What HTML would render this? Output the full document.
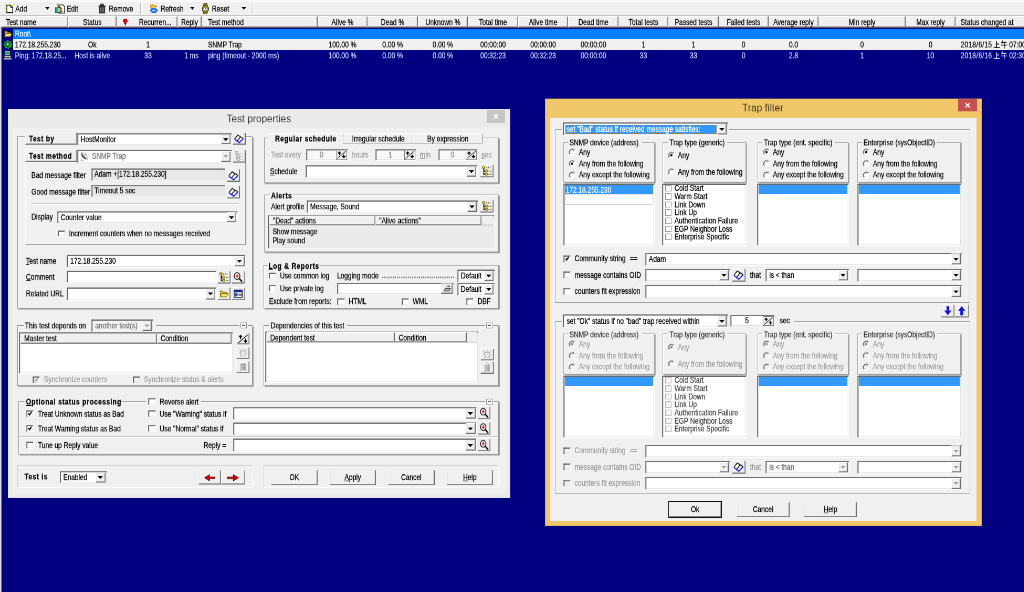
<!DOCTYPE html>
<html><head><meta charset="utf-8"><title>HostMonitor</title><style>
html,body{margin:0;padding:0;background:#000080;overflow:hidden}
body{width:1024px;height:592px;position:relative}
#root{position:absolute;left:0;top:0;width:1950.48px;height:925px;transform:scale(0.525,0.64);transform-origin:0 0;font-family:"Liberation Sans",sans-serif;font-size:12.5px;color:#000;overflow:hidden;will-change:transform}
#root div{position:absolute;box-sizing:border-box}
.t{white-space:nowrap;height:16px;line-height:16px;-webkit-text-stroke:0.3px}
.ttl{-webkit-text-stroke:0}
.b{font-weight:bold;letter-spacing:0.8px}
.g{color:#6d6d6d}
u{text-decoration:underline;text-underline-offset:1px}
.sunk{border-style:solid;border-width:1px 1.22px;border-color:#8c8c8c #fff #fff #8c8c8c;box-shadow:inset 1.22px 1px 0 #5c5c5c,inset -1.22px -1px 0 #e3e3e3}
.btn{background:#f0f0f0;border-style:solid;border-width:1px 1.22px;border-color:#fff #696969 #696969 #fff;box-shadow:inset -1.22px -1px 0 #a0a0a0,inset 1.22px 1px 0 #e8e8e8}
.btn.def{outline:1px solid #000}
.btn.sp{border-color:#808080;box-shadow:none;border-width:1.2px 1.46px}
.hdr{background:#f0f0f0;border-style:solid;border-width:1px 1.22px;border-color:#fff #696969 #696969 #fff;box-shadow:inset -1.22px -1px 0 #a0a0a0}
.cb .ar{position:absolute;left:50%;top:50%;width:9.9px;height:4.38px;margin-left:-5.14px;margin-top:-1.88px}
.grp{border-style:solid;border-width:1px 1.22px;border-color:#959595;box-shadow:inset 1.22px 1px 0 #fff}
.grp.shd{box-shadow:inset 1.22px 1px 0 #fff,1.95px 1.6px 0 #a0a0a0}
.ic{left:0;top:0;width:100%;height:100%}
</style></head><body><div id="root">
<div style="left:0px;top:0px;width:1950.48px;height:25.31px;background:#f0f0f0;"></div>
<div style="left:0px;top:0px;width:1950.48px;height:3.44px;background:#fafafa;"></div>
<div style="left:0px;top:24.06px;width:1950.48px;height:1.25px;background:#b4b4b4;"></div>
<div style="left:0px;top:25px;width:3.24px;height:900px;background:#dcdcdc;"></div>
<div style="left:2.1px;top:25px;width:1.52px;height:900px;background:#70708c;"></div>
<div style="left:7.62px;top:5px;width:20.19px;height:16.25px;"><svg viewBox="0 0 20 20" preserveAspectRatio="none" style="position:absolute;left:0;top:0;width:100%;height:100%"><path d="M1 1l4 4M19 1l-4 4M1 19l4-4M10 0v3M0 10h3" stroke="#e8e000" stroke-width="1.6"/><path d="M5 4h7l4 4v10H5z" fill="#fff" stroke="#222" stroke-width="1.5"/><path d="M12 4v4h4" fill="none" stroke="#222" stroke-width="1.2"/></svg></div>
<div class="t" style="left:29.33px;top:6.22px;">Add</div>
<div style="left:85.52px;top:11.25px;width:8.76px;height:4.06px;"><svg viewBox="0 0 7 4" preserveAspectRatio="none" style="position:absolute;left:0;top:0;width:100%;height:100%"><path d="M0 0h7L3.5 4z" fill="#000"/></svg></div>
<div style="left:103.81px;top:4.69px;width:21.14px;height:17.19px;"><svg viewBox="0 0 20 20" preserveAspectRatio="none" style="position:absolute;left:0;top:0;width:100%;height:100%"><path d="M7 3h8l3 3v12H7z" fill="#fff" stroke="#222" stroke-width="1.4"/><rect x="1.5" y="8" width="9" height="9" fill="#d8d060" stroke="#333" stroke-width="1"/><rect x="1.5" y="8" width="4" height="9" fill="#10a0c0"/><path d="M5 2l8 9" stroke="#6b4a00" stroke-width="2.2"/><path d="M4 1l3 3" stroke="#c0a000" stroke-width="2"/><path d="M9 14h6M9 16h6" stroke="#444" stroke-width="1"/></svg></div>
<div class="t" style="left:127.24px;top:6.22px;">Edit</div>
<div style="left:185.9px;top:5.31px;width:16.76px;height:16.56px;"><svg viewBox="0 0 16 20" preserveAspectRatio="none" style="position:absolute;left:0;top:0;width:100%;height:100%"><path d="M3 6h10v12.5H3z" fill="#444" stroke="#222" stroke-width="1"/><path d="M1.5 5.5h13" stroke="#222" stroke-width="2.2"/><path d="M5.5 1.5h5v3h-5z" fill="#555" stroke="#222" stroke-width="1.2"/><path d="M5.5 8v9M8 8v9M10.5 8v9" stroke="#999" stroke-width="0.9"/></svg></div>
<div class="t" style="left:207.24px;top:6.22px;">Remove</div>
<div style="left:267.05px;top:5px;width:1.33px;height:16.88px;background:#b8b8b8;"></div>
<div style="left:268.38px;top:5px;width:1.33px;height:16.88px;background:#fff;"></div>
<div style="left:283.43px;top:5.62px;width:19.43px;height:15.62px;"><svg viewBox="0 0 20 20" preserveAspectRatio="none" style="position:absolute;left:0;top:0;width:100%;height:100%"><path d="M3 3l5-2l5 3l-3 5l-6-1z" fill="#f4c020" stroke="#c08000" stroke-width="0.8"/><path d="M6 9l7-1l5 5l-4 5l-8-1l-3-4z" fill="#1f7cf0" stroke="#0a4bb0" stroke-width="0.8"/><path d="M8 6l4 2M7 13l6 1" stroke="#fff" stroke-width="1.2"/><circle cx="14.5" cy="5" r="1.6" fill="#e04040"/></svg></div>
<div class="t" style="left:305.9px;top:6.22px;">Refresh</div>
<div style="left:361.71px;top:11.25px;width:8.76px;height:4.06px;"><svg viewBox="0 0 7 4" preserveAspectRatio="none" style="position:absolute;left:0;top:0;width:100%;height:100%"><path d="M0 0h7L3.5 4z" fill="#000"/></svg></div>
<div style="left:382.86px;top:4.69px;width:16.38px;height:17.81px;"><svg viewBox="0 0 16 22" preserveAspectRatio="none" style="position:absolute;left:0;top:0;width:100%;height:100%"><path d="M5 0.5h6l1 5h-8z M5 21.5h6l1-5h-8z" fill="#8a8200" stroke="#222" stroke-width="0.9"/><circle cx="8" cy="11" r="6" fill="#c8c000" stroke="#222" stroke-width="1.3"/><circle cx="8" cy="11" r="3.3" fill="#fff" stroke="#444" stroke-width="0.7"/><path d="M8 11V8.6M8 11h2" stroke="#222" stroke-width="0.9"/></svg></div>
<div class="t" style="left:403.81px;top:6.22px;">Reset</div>
<div style="left:459.62px;top:11.25px;width:8.76px;height:4.06px;"><svg viewBox="0 0 7 4" preserveAspectRatio="none" style="position:absolute;left:0;top:0;width:100%;height:100%"><path d="M0 0h7L3.5 4z" fill="#000"/></svg></div>
<div style="left:481.14px;top:5px;width:1.33px;height:16.88px;background:#b8b8b8;"></div>
<div style="left:482.48px;top:5px;width:1.33px;height:16.88px;background:#fff;"></div>
<div style="left:0px;top:25.31px;width:1950.48px;height:17.81px;background:#f0f0f0;"></div>
<div class="hdr" style="left:3.43px;top:25.31px;width:126.1px;height:17.81px;"></div>
<div class="t" style="left:11.43px;top:27.16px;">Test name</div>
<div class="hdr" style="left:129.52px;top:25.31px;width:92.38px;height:17.81px;"></div>
<div class="t" style="left:110.48px;width:130.48px;text-align:center;top:27.16px;">Status</div>
<div class="hdr" style="left:221.9px;top:25.31px;width:116.19px;height:17.81px;"></div>
<div class="t" style="left:264.76px;top:27.16px;">Recurren...</div>
<div class="hdr" style="left:338.1px;top:25.31px;width:45.71px;height:17.81px;"></div>
<div class="t" style="left:319.05px;width:83.81px;text-align:center;top:27.16px;">Reply</div>
<div class="hdr" style="left:383.81px;top:25.31px;width:220.95px;height:17.81px;"></div>
<div class="t" style="left:396.19px;top:27.16px;">Test method</div>
<div class="hdr" style="left:604.76px;top:25.31px;width:95.24px;height:17.81px;"></div>
<div class="t" style="left:585.71px;width:133.33px;text-align:center;top:27.16px;">Alive %</div>
<div class="hdr" style="left:700px;top:25.31px;width:95.62px;height:17.81px;"></div>
<div class="t" style="left:680.95px;width:133.71px;text-align:center;top:27.16px;">Dead %</div>
<div class="hdr" style="left:795.62px;top:25.31px;width:95.81px;height:17.81px;"></div>
<div class="t" style="left:776.57px;width:133.9px;text-align:center;top:27.16px;">Unknown %</div>
<div class="hdr" style="left:891.43px;top:25.31px;width:95.24px;height:17.81px;"></div>
<div class="t" style="left:872.38px;width:133.33px;text-align:center;top:27.16px;">Total time</div>
<div class="hdr" style="left:986.67px;top:25.31px;width:95.81px;height:17.81px;"></div>
<div class="t" style="left:967.62px;width:133.9px;text-align:center;top:27.16px;">Alive time</div>
<div class="hdr" style="left:1082.48px;top:25.31px;width:95.62px;height:17.81px;"></div>
<div class="t" style="left:1063.43px;width:133.71px;text-align:center;top:27.16px;">Dead time</div>
<div class="hdr" style="left:1178.1px;top:25.31px;width:95.24px;height:17.81px;"></div>
<div class="t" style="left:1159.05px;width:133.33px;text-align:center;top:27.16px;">Total tests</div>
<div class="hdr" style="left:1273.33px;top:25.31px;width:95.24px;height:17.81px;"></div>
<div class="t" style="left:1254.29px;width:133.33px;text-align:center;top:27.16px;">Passed tests</div>
<div class="hdr" style="left:1368.57px;top:25.31px;width:95.24px;height:17.81px;"></div>
<div class="t" style="left:1349.52px;width:133.33px;text-align:center;top:27.16px;">Failed tests</div>
<div class="hdr" style="left:1463.81px;top:25.31px;width:95.24px;height:17.81px;"></div>
<div class="t" style="left:1444.76px;width:133.33px;text-align:center;top:27.16px;">Average reply</div>
<div class="hdr" style="left:1559.05px;top:25.31px;width:165.71px;height:17.81px;"></div>
<div class="t" style="left:1540px;width:203.81px;text-align:center;top:27.16px;">Min reply</div>
<div class="hdr" style="left:1724.76px;top:25.31px;width:95.24px;height:17.81px;"></div>
<div class="t" style="left:1705.71px;width:133.33px;text-align:center;top:27.16px;">Max reply</div>
<div class="hdr" style="left:1820px;top:25.31px;width:160.95px;height:17.81px;"></div>
<div class="t" style="left:1829.71px;top:27.16px;">Status changed at</div>
<div style="left:233.14px;top:29.06px;width:11.05px;height:10.94px;"><svg viewBox="0 0 10 12" preserveAspectRatio="none" style="position:absolute;left:0;top:0;width:100%;height:100%"><path d="M5 11L1 3.5L3 1h4l2 2.5z" fill="#e80000" stroke="#700" stroke-width="0.8"/><path d="M5 9v3" stroke="#222" stroke-width="1"/></svg></div>
<div style="left:0px;top:43.12px;width:1950.48px;height:0.62px;background:#40405e;"></div>
<div style="left:24.76px;top:44.84px;width:1925.71px;height:15.78px;background:#0080ff;"></div>
<div style="left:24.76px;top:60.62px;width:1925.71px;height:17.19px;background:#f0f0f0;"></div>
<div style="left:6.86px;top:46.88px;width:16.38px;height:11.56px;"><svg viewBox="0 0 18 14" preserveAspectRatio="none" style="position:absolute;left:0;top:0;width:100%;height:100%"><path d="M1 2h6l1.5 2H14v3H5L2 12V2z" fill="#c8b000" stroke="#3a3000" stroke-width="0.8"/><path d="M5 6.5H17.5L14 12.5H1.5z" fill="#f8e850" stroke="#3a3000" stroke-width="0.8"/></svg></div>
<div style="left:6.1px;top:61.88px;width:17.52px;height:15.31px;"><svg viewBox="0 0 18 18" preserveAspectRatio="none" style="position:absolute;left:0;top:0;width:100%;height:100%"><path d="M9 0l2.2 3.2L15 2.5l-.4 3.8L18 8.5l-3 2.3l1 3.7l-3.8-.2L10 17.8L8 15l-3.8 1l-.2-3.8L0.4 10L3 7.5L1.8 3.8l3.8.3z" fill="#00c000"/><circle cx="9" cy="8.6" r="4.6" fill="#0a8a0a" stroke="#063" stroke-width="0.8"/><circle cx="9" cy="8.2" r="2.4" fill="#d8f0d8" stroke="#222" stroke-width="0.8"/><path d="M9 11v4" stroke="#222" stroke-width="1.4"/></svg></div>
<div style="left:6.48px;top:79.06px;width:17.14px;height:14.69px;"><svg viewBox="0 0 18 18" preserveAspectRatio="none" style="position:absolute;left:0;top:0;width:100%;height:100%"><rect x="4" y="0.8" width="9.5" height="8" fill="#c8c8c8" stroke="#333" stroke-width="1"/><rect x="5.6" y="2.2" width="6" height="4.6" fill="#00b030"/><path d="M2.5 10h13v3h-13z" fill="#e8e8e8" stroke="#333" stroke-width="0.9"/><path d="M1 14.5h16v2.6H1z" fill="#f4f4f4" stroke="#333" stroke-width="0.9"/></svg></div>
<div class="t" style="left:28.57px;top:44.81px;color:#fff;">Root\</div>
<div class="t" style="left:28.57px;top:62px;color:#000;">172.18.255.230</div>
<div class="t" style="left:99.52px;width:152.38px;text-align:center;top:62px;color:#000;">Ok</div>
<div class="t" style="left:205.71px;width:152.38px;text-align:center;top:62px;color:#000;">1</div>
<div class="t" style="left:396.19px;top:62px;color:#000;">SNMP Trap</div>
<div class="t" style="left:576.19px;width:152.38px;text-align:center;top:62px;color:#000;">100.00 %</div>
<div class="t" style="left:671.62px;width:152.38px;text-align:center;top:62px;color:#000;">0.00 %</div>
<div class="t" style="left:767.33px;width:152.38px;text-align:center;top:62px;color:#000;">0.00 %</div>
<div class="t" style="left:862.86px;width:152.38px;text-align:center;top:62px;color:#000;">00:00:00</div>
<div class="t" style="left:958.38px;width:152.38px;text-align:center;top:62px;color:#000;">00:00:00</div>
<div class="t" style="left:1054.1px;width:152.38px;text-align:center;top:62px;color:#000;">00:00:00</div>
<div class="t" style="left:1149.52px;width:152.38px;text-align:center;top:62px;color:#000;">1</div>
<div class="t" style="left:1244.76px;width:152.38px;text-align:center;top:62px;color:#000;">1</div>
<div class="t" style="left:1340px;width:152.38px;text-align:center;top:62px;color:#000;">0</div>
<div class="t" style="left:1435.24px;width:152.38px;text-align:center;top:62px;color:#000;">0.0</div>
<div class="t" style="left:1565.71px;width:152.38px;text-align:center;top:62px;color:#000;">0</div>
<div class="t" style="left:1696.19px;width:152.38px;text-align:center;top:62px;color:#000;">0</div>
<div class="t" style="left:1829.71px;top:62px;color:#000;"><span style="letter-spacing:0.5px">2018/6/15</span><svg viewBox="0 0 22 11" preserveAspectRatio="none" style="display:inline-block;vertical-align:-1.5px;width:27px;height:12.5px;margin:0 3px 0 2.5px"><path d="M5 1v9M5 5h4M0.5 10h9.5" stroke="currentColor" stroke-width="1.3" fill="none"/><path d="M14.5 0.5L12.5 4M13.5 3h7M12 6.5h9.5M17 3v8" stroke="currentColor" stroke-width="1.1" fill="none"/></svg>07:00</div>
<div class="t" style="left:28.57px;top:78.56px;color:#c0d6ff;">Ping: 172.18.25...</div>
<div class="t" style="left:99.52px;width:152.38px;text-align:center;top:78.56px;color:#c0d6ff;">Host is alive</div>
<div class="t" style="left:205.71px;width:152.38px;text-align:center;top:78.56px;color:#c0d6ff;">33</div>
<div class="t" style="right:1572.19px;text-align:right;top:78.56px;color:#c0d6ff;">1 ms</div>
<div class="t" style="left:396.19px;top:78.56px;color:#c0d6ff;">ping (timeout - 2000 ms)</div>
<div class="t" style="left:576.19px;width:152.38px;text-align:center;top:78.56px;color:#c0d6ff;">100.00 %</div>
<div class="t" style="left:671.62px;width:152.38px;text-align:center;top:78.56px;color:#c0d6ff;">0.00 %</div>
<div class="t" style="left:767.33px;width:152.38px;text-align:center;top:78.56px;color:#c0d6ff;">0.00 %</div>
<div class="t" style="left:862.86px;width:152.38px;text-align:center;top:78.56px;color:#c0d6ff;">00:32:23</div>
<div class="t" style="left:958.38px;width:152.38px;text-align:center;top:78.56px;color:#c0d6ff;">00:32:23</div>
<div class="t" style="left:1054.1px;width:152.38px;text-align:center;top:78.56px;color:#c0d6ff;">00:00:00</div>
<div class="t" style="left:1149.52px;width:152.38px;text-align:center;top:78.56px;color:#c0d6ff;">33</div>
<div class="t" style="left:1244.76px;width:152.38px;text-align:center;top:78.56px;color:#c0d6ff;">33</div>
<div class="t" style="left:1340px;width:152.38px;text-align:center;top:78.56px;color:#c0d6ff;">0</div>
<div class="t" style="left:1435.24px;width:152.38px;text-align:center;top:78.56px;color:#c0d6ff;">2.8</div>
<div class="t" style="left:1565.71px;width:152.38px;text-align:center;top:78.56px;color:#c0d6ff;">1</div>
<div class="t" style="left:1696.19px;width:152.38px;text-align:center;top:78.56px;color:#c0d6ff;">10</div>
<div class="t" style="left:1829.71px;top:78.56px;color:#c0d6ff;"><span style="letter-spacing:0.5px">2018/6/16</span><svg viewBox="0 0 22 11" preserveAspectRatio="none" style="display:inline-block;vertical-align:-1.5px;width:27px;height:12.5px;margin:0 3px 0 2.5px"><path d="M5 1v9M5 5h4M0.5 10h9.5" stroke="currentColor" stroke-width="1.3" fill="none"/><path d="M14.5 0.5L12.5 4M13.5 3h7M12 6.5h9.5M17 3v8" stroke="currentColor" stroke-width="1.1" fill="none"/></svg>02:30</div>
<div style="left:15.24px;top:170.31px;width:956.95px;height:608.12px;background:#ebebeb;border:1px solid #dedede;"></div>
<div style="left:23.62px;top:200.94px;width:940.19px;height:570.63px;background:#f0f0f0;border:1px solid #f8f8f8;"></div>
<div class="t ttl" style="left:293.33px;width:400px;text-align:center;top:176.25px;height:20px;line-height:20px;font-size:15.6px;color:#3c3c3c;transform:scaleX(1.2)">Test properties</div>
<div style="left:926.86px;top:171.88px;width:35.05px;height:19.69px;background:#c6c6c6;"><svg viewBox="0 0 30 20" preserveAspectRatio="none" style="position:absolute;left:0;top:0;width:100%;height:100%"><path d="M11.5 6.5l7 7M18.5 6.5l-7 7" stroke="#fff" stroke-width="1.8"/></svg></div>
<div class="grp shd" style="left:33.14px;top:213.44px;width:448px;height:268.44px;"></div>
<div style="left:47.62px;top:252.5px;width:420.19px;height:129.69px;background:#f0f0f0;border-style:solid;border-width:1px 1.22px;border-color:#fff #9a9a9a #9a9a9a #fff;box-shadow:1.22px 1px 0 #b8b8b8;"></div>
<div class="btn" style="left:47.62px;top:206.41px;width:99.43px;height:19.69px;"></div>
<div class="t b" style="left:55.24px;top:208.72px;">Test by</div>
<div class="btn" style="left:47.62px;top:232.97px;width:99.43px;height:20.31px;"></div>
<div class="t b" style="left:55.24px;top:235.75px;">Test method</div>
<div class="sunk" style="left:146.67px;top:207.66px;width:295.05px;height:19.69px;background:#fff;"></div>
<div class="btn cb" style="left:420.57px;top:209.53px;width:18.29px;height:15.94px;"><svg class="ar" viewBox="0 0 7 4" preserveAspectRatio="none"><path d="M0 0h7L3.5 4z" fill="#000"/></svg></div>
<div class="t" style="left:153.52px;top:209.66px;color:#000;">HostMonitor</div>
<div class="btn" style="left:443.05px;top:207.34px;width:24.76px;height:19.06px;"><svg viewBox="0 0 20 16" preserveAspectRatio="none" style="position:absolute;left:0;top:0;width:100%;height:100%"><path d="M2.4 8.6L7.8 3L17.1 7.8L10.2 13.8z" fill="#fff"/><path d="M2.4 8.6L7.8 3L17.1 7.8" fill="none" stroke="#111" stroke-width="1.4"/><path d="M2.4 8.8L10.2 13.9L17.1 8" fill="none" stroke="#2020f0" stroke-width="1.7"/><path d="M6.6 11.6L12.8 5.2" stroke="#222" stroke-width="1.5"/></svg></div>
<div class="sunk" style="left:146.67px;top:234.22px;width:295.05px;height:20.31px;background:#fff;"></div>
<div class="btn cb" style="left:420.57px;top:236.09px;width:18.29px;height:16.56px;"><svg class="ar" viewBox="0 0 7 4" preserveAspectRatio="none"><path d="M0 0h7L3.5 4z" fill="#a0a0a0"/></svg></div>
<div style="left:151.62px;top:236.25px;width:17.9px;height:15.94px;"><svg viewBox="0 0 20 20" preserveAspectRatio="none" style="position:absolute;left:0;top:0;width:100%;height:100%"><path d="M3 2C1 9 6 17 17 16.5C13 14 6 9 3 2z" fill="#555"/><path d="M4 2.5C7 8 12 13 17 16C17 10 12 4 4 2.5z" fill="#e2e2e2" stroke="#b0b0b0" stroke-width="0.8"/><path d="M9 10L14 5M10.5 3.5l5 5" stroke="#9a9a9a" stroke-width="1.1"/><path d="M4 15l-2 4h8" fill="none" stroke="#b8b8b8" stroke-width="1.6"/></svg></div>
<div class="t" style="left:175.24px;top:236.38px;color:#7a7a7a;">SNMP Trap</div>
<div class="btn" style="left:443.05px;top:233.91px;width:24.76px;height:19.69px;"><svg viewBox="0 0 20 16" preserveAspectRatio="none" style="position:absolute;left:0;top:0;width:100%;height:100%"><path d="M6 2v12M6 5h5M6 9h5M6 13h5" stroke="#a4a4a4" stroke-width="1.2" fill="none"/><rect x="4" y="1.5" width="4" height="3.2" fill="#e8e8e8" stroke="#a8a8a8" stroke-width="0.9"/><rect x="7" y="6.5" width="4" height="3.2" fill="#e8e8e8" stroke="#a8a8a8" stroke-width="0.9"/><rect x="7" y="10.8" width="4" height="3.2" fill="#e8e8e8" stroke="#a8a8a8" stroke-width="0.9"/><path d="M12 5h5M12 9h5M12 13h5" stroke="#9c9c9c" stroke-width="1.2" stroke-dasharray="1.3 1.3"/></svg></div>
<div class="t" style="left:59.81px;top:266.06px;">Bad message filter</div>
<div class="sunk" style="left:174.48px;top:263.44px;width:254.67px;height:19.38px;background:#e8e8e8;"></div>
<div class="t" style="left:179.81px;top:264.19px;">Adam +[172.18.255.230]</div>
<div class="btn" style="left:431.62px;top:263.91px;width:25.52px;height:20.31px;"><svg viewBox="0 0 20 16" preserveAspectRatio="none" style="position:absolute;left:0;top:0;width:100%;height:100%"><path d="M2.4 8.6L7.8 3L17.1 7.8L10.2 13.8z" fill="#fff"/><path d="M2.4 8.6L7.8 3L17.1 7.8" fill="none" stroke="#111" stroke-width="1.4"/><path d="M2.4 8.8L10.2 13.9L17.1 8" fill="none" stroke="#2020f0" stroke-width="1.7"/><path d="M6.6 11.6L12.8 5.2" stroke="#222" stroke-width="1.5"/></svg></div>
<div class="t" style="left:59.81px;top:291.69px;">Good message filter</div>
<div class="sunk" style="left:174.48px;top:289.06px;width:254.67px;height:19.06px;background:#e8e8e8;"></div>
<div class="t" style="left:179.81px;top:289.81px;">Timeout 5 sec</div>
<div class="btn" style="left:431.62px;top:289.84px;width:25.52px;height:20px;"><svg viewBox="0 0 20 16" preserveAspectRatio="none" style="position:absolute;left:0;top:0;width:100%;height:100%"><path d="M2.4 8.6L7.8 3L17.1 7.8L10.2 13.8z" fill="#fff"/><path d="M2.4 8.6L7.8 3L17.1 7.8" fill="none" stroke="#111" stroke-width="1.4"/><path d="M2.4 8.8L10.2 13.9L17.1 8" fill="none" stroke="#2020f0" stroke-width="1.7"/><path d="M6.6 11.6L12.8 5.2" stroke="#222" stroke-width="1.5"/></svg></div>
<div style="left:59.81px;top:318.12px;width:395.43px;height:1.09px;background:#a0a0a0;"></div>
<div style="left:59.81px;top:319.22px;width:395.43px;height:1.09px;background:#fff;"></div>
<div class="t" style="left:59.81px;top:331.38px;">Display</div>
<div class="sunk" style="left:108.95px;top:329.53px;width:344.19px;height:19.69px;background:#fff;"></div>
<div class="btn cb" style="left:432px;top:331.41px;width:18.29px;height:15.94px;"><svg class="ar" viewBox="0 0 7 4" preserveAspectRatio="none"><path d="M0 0h7L3.5 4z" fill="#000"/></svg></div>
<div class="t" style="left:115.81px;top:331.53px;color:#000;">Counter value</div>
<div class="sunk" style="left:109.71px;top:359.69px;width:14.29px;height:10.63px;background:#fff;"></div>
<div class="t" style="left:131.43px;top:357px;">Increment counters when no messages received</div>
<div class="t" style="left:49.52px;top:399.81px;"><u>T</u>est name</div>
<div class="sunk" style="left:126.86px;top:397.66px;width:341.52px;height:20.31px;background:#fff;"></div>
<div class="btn cb" style="left:447.24px;top:399.53px;width:18.29px;height:16.56px;"><svg class="ar" viewBox="0 0 7 4" preserveAspectRatio="none"><path d="M0 0h7L3.5 4z" fill="#000"/></svg></div>
<div class="t" style="left:133.71px;top:399.97px;color:#000;">172.18.255.230</div>
<div class="t" style="left:49.52px;top:424.81px;"><u>C</u>omment</div>
<div class="sunk" style="left:126.86px;top:423.44px;width:286.29px;height:18.75px;background:#fff;"></div>
<div class="btn" style="left:414.48px;top:423.28px;width:24.76px;height:20px;"><svg viewBox="0 0 20 16" preserveAspectRatio="none" style="position:absolute;left:0;top:0;width:100%;height:100%"><path d="M5.5 3v10.5M5.5 8.2h4M5.5 12.6h4" stroke="#111" stroke-width="1.4" fill="none"/><rect x="3.2" y="1.6" width="4" height="3.2" rx="1.2" fill="#f0e000" stroke="#443a00" stroke-width="0.8"/><rect x="7.6" y="6.4" width="4" height="3.2" rx="1.2" fill="#f0e000" stroke="#443a00" stroke-width="0.8"/><rect x="7.6" y="10.8" width="4" height="3.2" rx="1.2" fill="#f0e000" stroke="#443a00" stroke-width="0.8"/><path d="M9 3.6h7M13 8.4h5M13 12.8h5" stroke="#333" stroke-width="1.2" stroke-dasharray="1.5 1.5"/></svg></div>
<div class="btn" style="left:441.14px;top:423.28px;width:25.52px;height:20px;"><svg viewBox="0 0 20 16" preserveAspectRatio="none" style="position:absolute;left:0;top:0;width:100%;height:100%"><circle cx="8.2" cy="6.5" r="4.6" fill="#fff" stroke="#222" stroke-width="1.4"/><path d="M8.2 4v5M5.7 6.5h5" stroke="#e00000" stroke-width="1.5"/><path d="M11.6 9.8L16.5 14.5" stroke="#111" stroke-width="2.2"/></svg></div>
<div class="t" style="left:49.52px;top:450.75px;">Related URL</div>
<div class="sunk" style="left:126.86px;top:449.22px;width:286.29px;height:20.31px;background:#fff;"></div>
<div class="btn cb" style="left:392px;top:451.09px;width:18.29px;height:16.56px;"><svg class="ar" viewBox="0 0 7 4" preserveAspectRatio="none"><path d="M0 0h7L3.5 4z" fill="#000"/></svg></div>
<div class="btn" style="left:414.48px;top:449.22px;width:24.76px;height:19.38px;"><svg viewBox="0 0 20 16" preserveAspectRatio="none" style="position:absolute;left:0;top:0;width:100%;height:100%"><path d="M3 4.5h5l1.2 1.3H15v2H6.5L4 12.5V4.5z" fill="#e8d040" stroke="#6b5a00" stroke-width="0.8"/><path d="M6.5 7.8H17.5L14.8 12.8H3.8z" fill="#f6e860" stroke="#6b5a00" stroke-width="0.8"/></svg></div>
<div class="btn" style="left:441.14px;top:449.22px;width:25.52px;height:19.38px;"><svg viewBox="0 0 20 16" preserveAspectRatio="none" style="position:absolute;left:0;top:0;width:100%;height:100%"><rect x="3.5" y="3" width="13" height="10.5" fill="#fff" stroke="#111" stroke-width="1.1"/><rect x="3.5" y="3" width="13" height="3" fill="#0a2a9a"/><rect x="5" y="7.5" width="4" height="4.5" fill="#0a5ad0"/><rect x="10.5" y="8" width="2" height="3" fill="#d02020"/><rect x="13.4" y="8" width="2" height="3" fill="#222"/></svg></div>
<div class="grp shd" style="left:33.14px;top:508.44px;width:448px;height:94.69px;"></div>
<div style="left:44.76px;top:501.56px;width:252.38px;height:14.06px;background:#f0f0f0;"></div>
<div class="t" style="left:47.62px;top:500.75px;">This test depends on</div>
<div class="sunk" style="left:174.48px;top:499.22px;width:117.52px;height:19.69px;background:#f4f4f4;"></div>
<div class="btn cb" style="left:270.86px;top:501.09px;width:18.29px;height:15.94px;"><svg class="ar" viewBox="0 0 7 4" preserveAspectRatio="none"><path d="M0 0h7L3.5 4z" fill="#a0a0a0"/></svg></div>
<div class="t" style="left:181.33px;top:501.22px;color:#6d6d6d;">another test(s)</div>
<div style="left:456.38px;top:503.75px;width:15.24px;height:9.06px;background:#f0f0f0;"></div>
<div style="left:458.29px;top:503.75px;width:11.43px;height:9.06px;background:#fff;border-style:solid;border-width:1px 1.22px;border-color:#8c8c8c;"><svg viewBox="0 0 10 10" preserveAspectRatio="none" style="position:absolute;left:0;top:0;width:100%;height:100%"><path d="M2 4.6h6" stroke="#333" stroke-width="1.6"/></svg></div>
<div class="sunk" style="left:36.19px;top:519.38px;width:407.43px;height:64.38px;background:#fff;"></div>
<div class="hdr" style="left:39.24px;top:520.62px;width:259.81px;height:16.25px;"></div>
<div class="t" style="left:46.1px;top:521.06px;">Master test</div>
<div class="hdr" style="left:299.05px;top:520.62px;width:141.71px;height:16.25px;"></div>
<div class="t" style="left:305.9px;top:521.06px;">Condition</div>
<div class="btn" style="left:449.52px;top:519.53px;width:25.9px;height:18.75px;"><svg viewBox="0 0 20 16" preserveAspectRatio="none" style="position:absolute;left:0;top:0;width:100%;height:100%"><path d="M2.5 14L17.5 2" stroke="#111" stroke-width="1.2"/><path d="M6 1.6L9.4 5.6H2.6z M5.2 5.6h1.6v3H5.2z" fill="#000"/><path d="M14 14.6L10.6 10.6h6.8z M13.2 7.6h1.6v3h-1.6z" fill="#000"/></svg></div>
<div class="btn flat" style="left:449.52px;top:542.03px;width:25.9px;height:18.75px;"><svg viewBox="0 0 20 16" preserveAspectRatio="none" style="position:absolute;left:0;top:0;width:100%;height:100%"><rect x="6" y="5" width="8.5" height="8" fill="#e4e4e4" stroke="#a8a8a8" stroke-width="1"/><path d="M4 2.5l3 3M16.5 2.5l-3 3M10.2 1.5v3.5M3.5 8.5h2.5M17 8.5h-2.5" stroke="#b0b0b0" stroke-width="1"/><path d="M7 13.5h7" stroke="#fff" stroke-width="1"/></svg></div>
<div class="btn flat" style="left:449.52px;top:563.91px;width:25.9px;height:19.38px;"><svg viewBox="0 0 20 16" preserveAspectRatio="none" style="position:absolute;left:0;top:0;width:100%;height:100%"><path d="M6.5 4.5h7.5v9.5h-7.5z" fill="#d8d8d8" stroke="#a0a0a0" stroke-width="1"/><path d="M5.5 4.2h9.5M8.5 2.3h3.5v1.8M8.4 6.3v6M10.3 6.3v6M12.2 6.3v6" stroke="#9a9a9a" stroke-width="1" fill="none"/><path d="M14.8 5v9.3H7" stroke="#fff" stroke-width="0.9" fill="none"/></svg></div>
<div class="sunk" style="left:62.1px;top:588.12px;width:14.29px;height:10.63px;background:#f0f0f0;"><svg viewBox="0 0 9 9" style="position:absolute;left:0;top:0;width:100%;height:100%"><path d="M1.5 4.2L3.5 6.4L7.5 1.8" stroke="#a0a0a0" stroke-width="2.1" fill="none"/></svg></div>
<div class="t" style="left:83.81px;top:585.44px;color:#9a9a9a;text-shadow:1px 1px 0 #fff;">Synchronize counters</div>
<div class="sunk" style="left:252.57px;top:588.12px;width:14.29px;height:10.63px;background:#f0f0f0;"></div>
<div class="t" style="left:274.29px;top:585.44px;color:#9a9a9a;text-shadow:1px 1px 0 #fff;">Synchronize status &amp; alerts</div>
<div class="grp shd" style="left:502.86px;top:214.69px;width:446.86px;height:71.25px;"></div>
<div style="left:510.48px;top:207.81px;width:144px;height:16.88px;background:#f0f0f0;border-style:solid;border-width:1px 1.22px 0 1.22px;border-color:#fff #8c8c8c #fff #fff;"></div>
<div class="t b" style="left:510.48px;width:144px;text-align:center;top:208.88px;">Regular schedule</div>
<div style="left:654.48px;top:207.81px;width:132.19px;height:16.88px;background:#f0f0f0;border-style:solid;border-width:1px 1.22px 0 1.22px;border-color:#fff #8c8c8c #fff #fff;"></div>
<div class="t" style="left:654.48px;width:132.19px;text-align:center;top:208.88px;">Irregular schedule</div>
<div style="left:786.67px;top:207.81px;width:132.57px;height:16.88px;background:#f0f0f0;border-style:solid;border-width:1px 1.22px 0 1.22px;border-color:#fff #8c8c8c #fff #fff;"></div>
<div class="t" style="left:786.67px;width:132.57px;text-align:center;top:208.88px;">By expression</div>
<div style="left:654.48px;top:224.06px;width:264.76px;height:1.25px;background:#b4b4b4;"></div>
<div class="t" style="left:516.19px;top:233.56px;color:#9a9a9a;text-shadow:1px 1px 0 #fff;">Test every</div>
<div class="sunk" style="left:583.24px;top:232.81px;width:80.19px;height:18.12px;background:#f8f8f8;"></div>
<div class="t" style="left:583.9px;width:57.14px;text-align:center;top:233.88px;color:#8a8a8a;">0</div>
<div class="btn sp" style="left:640px;top:234.06px;width:21.33px;height:15.62px;"><svg viewBox="0 0 20 18" preserveAspectRatio="none" style="position:absolute;left:0;top:0;width:100%;height:100%"><path d="M1.5 16.5L18.5 1.5" stroke="#111" stroke-width="1.2"/><path d="M5.6 1.6L9.6 6.2H1.6z M4.6 6.2h2v3.4h-2z" fill="#000"/><path d="M14.4 16.4L10.4 11.8h8z M13.4 8.4h2v3.4h-2z" fill="#000"/></svg></div>
<div class="t" style="left:670.48px;top:233.56px;color:#9a9a9a;text-shadow:1px 1px 0 #fff;">hours</div>
<div class="sunk" style="left:714.67px;top:232.81px;width:78.67px;height:18.12px;background:#f8f8f8;"></div>
<div class="t" style="left:714.57px;width:57.14px;text-align:center;top:233.88px;color:#8a8a8a;">1</div>
<div class="btn sp" style="left:769.9px;top:234.06px;width:21.33px;height:15.62px;"><svg viewBox="0 0 20 18" preserveAspectRatio="none" style="position:absolute;left:0;top:0;width:100%;height:100%"><path d="M1.5 16.5L18.5 1.5" stroke="#111" stroke-width="1.2"/><path d="M5.6 1.6L9.6 6.2H1.6z M4.6 6.2h2v3.4h-2z" fill="#000"/><path d="M14.4 16.4L10.4 11.8h8z M13.4 8.4h2v3.4h-2z" fill="#000"/></svg></div>
<div class="t" style="left:800px;top:233.56px;color:#9a9a9a;text-shadow:1px 1px 0 #fff;"><u>m</u>in</div>
<div class="sunk" style="left:834.67px;top:232.81px;width:75.62px;height:18.12px;background:#f8f8f8;"></div>
<div class="t" style="left:833.05px;width:57.14px;text-align:center;top:233.88px;color:#8a8a8a;">0</div>
<div class="btn sp" style="left:886.86px;top:234.06px;width:21.33px;height:15.62px;"><svg viewBox="0 0 20 18" preserveAspectRatio="none" style="position:absolute;left:0;top:0;width:100%;height:100%"><path d="M1.5 16.5L18.5 1.5" stroke="#111" stroke-width="1.2"/><path d="M5.6 1.6L9.6 6.2H1.6z M4.6 6.2h2v3.4h-2z" fill="#000"/><path d="M14.4 16.4L10.4 11.8h8z M13.4 8.4h2v3.4h-2z" fill="#000"/></svg></div>
<div class="t" style="left:917.33px;top:233.56px;color:#9a9a9a;text-shadow:1px 1px 0 #fff;"><u>s</u>ec</div>
<div class="t" style="left:514.29px;top:259.81px;"><u>S</u>chedule</div>
<div class="sunk" style="left:582.1px;top:257.97px;width:328.19px;height:20px;background:#fff;"></div>
<div class="btn cb" style="left:889.14px;top:259.84px;width:18.29px;height:16.25px;"><svg class="ar" viewBox="0 0 7 4" preserveAspectRatio="none"><path d="M0 0h7L3.5 4z" fill="#000"/></svg></div>
<div class="btn" style="left:914.29px;top:257.03px;width:25.9px;height:20px;"><svg viewBox="0 0 20 16" preserveAspectRatio="none" style="position:absolute;left:0;top:0;width:100%;height:100%"><path d="M5.5 3v10.5M5.5 8.2h4M5.5 12.6h4" stroke="#111" stroke-width="1.4" fill="none"/><rect x="3.2" y="1.6" width="4" height="3.2" rx="1.2" fill="#f0e000" stroke="#443a00" stroke-width="0.8"/><rect x="7.6" y="6.4" width="4" height="3.2" rx="1.2" fill="#f0e000" stroke="#443a00" stroke-width="0.8"/><rect x="7.6" y="10.8" width="4" height="3.2" rx="1.2" fill="#f0e000" stroke="#443a00" stroke-width="0.8"/><path d="M9 3.6h7M13 8.4h5M13 12.8h5" stroke="#333" stroke-width="1.2" stroke-dasharray="1.5 1.5"/></svg></div>
<div class="grp shd" style="left:502.86px;top:304.06px;width:446.86px;height:90.31px;"></div>
<div style="left:514.29px;top:299.69px;width:41.9px;height:12.5px;background:#f0f0f0;"></div>
<div class="t b" style="left:516.19px;top:297.94px;">Alerts</div>
<div class="t" style="left:516.19px;top:314.5px;">Alert <u>p</u>rofile</div>
<div class="sunk" style="left:584px;top:312.66px;width:327.05px;height:20px;background:#fff;"></div>
<div class="btn cb" style="left:889.9px;top:314.53px;width:18.29px;height:16.25px;"><svg class="ar" viewBox="0 0 7 4" preserveAspectRatio="none"><path d="M0 0h7L3.5 4z" fill="#000"/></svg></div>
<div class="t" style="left:590.86px;top:314.81px;color:#000;">Message, Sound</div>
<div class="btn" style="left:914.29px;top:311.72px;width:25.9px;height:20px;"><svg viewBox="0 0 20 16" preserveAspectRatio="none" style="position:absolute;left:0;top:0;width:100%;height:100%"><path d="M5.5 3v10.5M5.5 8.2h4M5.5 12.6h4" stroke="#111" stroke-width="1.4" fill="none"/><rect x="3.2" y="1.6" width="4" height="3.2" rx="1.2" fill="#f0e000" stroke="#443a00" stroke-width="0.8"/><rect x="7.6" y="6.4" width="4" height="3.2" rx="1.2" fill="#f0e000" stroke="#443a00" stroke-width="0.8"/><rect x="7.6" y="10.8" width="4" height="3.2" rx="1.2" fill="#f0e000" stroke="#443a00" stroke-width="0.8"/><path d="M9 3.6h7M13 8.4h5M13 12.8h5" stroke="#333" stroke-width="1.2" stroke-dasharray="1.5 1.5"/></svg></div>
<div class="sunk" style="left:510.48px;top:335.62px;width:431.05px;height:53.44px;background:#ebebeb;"></div>
<div class="hdr" style="left:513.14px;top:336.88px;width:202.29px;height:15.62px;"></div>
<div class="t" style="left:520px;top:337px;">"Dead" actions</div>
<div class="hdr" style="left:715.43px;top:336.88px;width:201.9px;height:15.62px;"></div>
<div class="t" style="left:722.29px;top:337px;">"Alive actions"</div>
<div style="left:917.33px;top:336.88px;width:21.71px;height:15.62px;background:#f0f0f0;border-bottom:1px solid #a0a0a0;"></div>
<div class="t" style="left:519.24px;top:353.56px;">Show message</div>
<div class="t" style="left:519.24px;top:367.62px;">Play sound</div>
<div class="grp shd" style="left:502.1px;top:414.06px;width:447.62px;height:67.81px;"></div>
<div style="left:509.71px;top:409.38px;width:99.05px;height:12.5px;background:#f0f0f0;"></div>
<div class="t b" style="left:511.62px;top:407.62px;"><u>L</u>og &amp; Reports</div>
<div class="sunk" style="left:511.62px;top:425.63px;width:14.29px;height:10.63px;background:#fff;"></div>
<div class="t" style="left:533.33px;top:422.94px;">Use common log</div>
<div class="t" style="left:641.9px;top:422.94px;">Logging mode</div>
<div class="t" style="left:726.67px;top:422.31px;color:#555;letter-spacing:0.08px;overflow:hidden;width:137.14px;">........................................</div>
<div class="sunk" style="left:870.86px;top:421.09px;width:71.81px;height:19.69px;background:#fff;"></div>
<div class="btn cb" style="left:921.52px;top:422.97px;width:18.29px;height:15.94px;"><svg class="ar" viewBox="0 0 7 4" preserveAspectRatio="none"><path d="M0 0h7L3.5 4z" fill="#000"/></svg></div>
<div class="t" style="left:877.71px;top:423.09px;color:#000;">Default</div>
<div class="sunk" style="left:511.62px;top:445.31px;width:14.29px;height:10.63px;background:#fff;"></div>
<div class="t" style="left:533.33px;top:442.62px;">Use private log</div>
<div class="sunk" style="left:642.29px;top:442.19px;width:222.29px;height:18.13px;background:#fff;"></div>
<div class="btn" style="left:840px;top:443.28px;width:22.1px;height:15.94px;"><svg viewBox="0 0 20 16" preserveAspectRatio="none" style="position:absolute;left:0;top:0;width:100%;height:100%"><path d="M4 12.5h12.5M5 10.5h10.5l1.5-3H8z" fill="#ddd" stroke="#222" stroke-width="1"/><path d="M9 5.5c1.5-2.5 4-2.8 6-1.5M13.8 2.4l1.6 1.7l-2.3 0.8" fill="none" stroke="#222" stroke-width="1"/></svg></div>
<div class="sunk" style="left:870.86px;top:442.03px;width:71.81px;height:19.69px;background:#fff;"></div>
<div class="btn cb" style="left:921.52px;top:443.91px;width:18.29px;height:15.94px;"><svg class="ar" viewBox="0 0 7 4" preserveAspectRatio="none"><path d="M0 0h7L3.5 4z" fill="#000"/></svg></div>
<div class="t" style="left:877.71px;top:444.03px;color:#000;">Default</div>
<div class="t" style="left:512.38px;top:463.25px;">Exclude from reports:</div>
<div class="sunk" style="left:642.29px;top:465.94px;width:14.29px;height:10.63px;background:#fff;"></div>
<div class="t" style="left:664px;top:463.25px;">HTML</div>
<div class="sunk" style="left:764.95px;top:465.94px;width:14.29px;height:10.63px;background:#fff;"></div>
<div class="t" style="left:785.9px;top:463.25px;">WML</div>
<div class="sunk" style="left:888px;top:465.94px;width:14.29px;height:10.63px;background:#fff;"></div>
<div class="t" style="left:909.71px;top:463.25px;">DBF</div>
<div class="grp shd" style="left:502.1px;top:508.44px;width:447.62px;height:94.69px;"></div>
<div style="left:512.57px;top:502.5px;width:148.57px;height:12.5px;background:#f0f0f0;"></div>
<div class="t" style="left:515.43px;top:500.75px;">Dependencies of this test</div>
<div style="left:923.81px;top:503.75px;width:16px;height:9.06px;background:#f0f0f0;"></div>
<div style="left:925.71px;top:503.75px;width:12.19px;height:9.06px;background:#fff;border-style:solid;border-width:1px 1.22px;border-color:#8c8c8c;"><svg viewBox="0 0 10 10" preserveAspectRatio="none" style="position:absolute;left:0;top:0;width:100%;height:100%"><path d="M2 4.6h6" stroke="#333" stroke-width="1.6"/></svg></div>
<div class="sunk" style="left:504.76px;top:517.81px;width:406.29px;height:80px;background:#fff;"></div>
<div class="hdr" style="left:507.81px;top:519.06px;width:244.57px;height:16.25px;"></div>
<div class="t" style="left:514.67px;top:519.5px;">Dependent test</div>
<div class="hdr" style="left:752.38px;top:519.06px;width:136.38px;height:16.25px;"></div>
<div class="t" style="left:759.24px;top:519.5px;">Condition</div>
<div style="left:888.76px;top:519.06px;width:19.81px;height:16.25px;background:#f0f0f0;border-bottom:1px solid #a0a0a0;"></div>
<div class="btn flat" style="left:915.43px;top:543.59px;width:25.52px;height:19.38px;"><svg viewBox="0 0 20 16" preserveAspectRatio="none" style="position:absolute;left:0;top:0;width:100%;height:100%"><rect x="6" y="5" width="8.5" height="8" fill="#e4e4e4" stroke="#a8a8a8" stroke-width="1"/><path d="M4 2.5l3 3M16.5 2.5l-3 3M10.2 1.5v3.5M3.5 8.5h2.5M17 8.5h-2.5" stroke="#b0b0b0" stroke-width="1"/><path d="M7 13.5h7" stroke="#fff" stroke-width="1"/></svg></div>
<div class="btn flat" style="left:915.43px;top:564.84px;width:25.52px;height:19.38px;"><svg viewBox="0 0 20 16" preserveAspectRatio="none" style="position:absolute;left:0;top:0;width:100%;height:100%"><path d="M6.5 4.5h7.5v9.5h-7.5z" fill="#d8d8d8" stroke="#a0a0a0" stroke-width="1"/><path d="M5.5 4.2h9.5M8.5 2.3h3.5v1.8M8.4 6.3v6M10.3 6.3v6M12.2 6.3v6" stroke="#9a9a9a" stroke-width="1" fill="none"/><path d="M14.8 5v9.3H7" stroke="#fff" stroke-width="0.9" fill="none"/></svg></div>
<div class="grp shd" style="left:35.05px;top:626.56px;width:914.67px;height:83.12px;"></div>
<div style="left:46.67px;top:621.25px;width:184.76px;height:12.5px;background:#f0f0f0;"></div>
<div class="t b" style="left:49.52px;top:619.5px;"><u>O</u>ptional status processing</div>
<div style="left:278.1px;top:620.31px;width:104.76px;height:14.06px;background:#f0f0f0;"></div>
<div class="sunk" style="left:282.29px;top:622.19px;width:14.29px;height:10.63px;background:#fff;"></div>
<div class="t" style="left:304px;top:619.5px;">Reverse alert</div>
<div style="left:923.81px;top:622.5px;width:16px;height:9.06px;background:#f0f0f0;"></div>
<div style="left:925.71px;top:622.5px;width:12.19px;height:9.06px;background:#fff;border-style:solid;border-width:1px 1.22px;border-color:#8c8c8c;"><svg viewBox="0 0 10 10" preserveAspectRatio="none" style="position:absolute;left:0;top:0;width:100%;height:100%"><path d="M2 4.6h6" stroke="#333" stroke-width="1.6"/></svg></div>
<div class="sunk" style="left:49.52px;top:641.25px;width:14.29px;height:10.63px;background:#fff;"><svg viewBox="0 0 9 9" style="position:absolute;left:0;top:0;width:100%;height:100%"><path d="M1.5 4.2L3.5 6.4L7.5 1.8" stroke="#000" stroke-width="2.1" fill="none"/></svg></div>
<div class="t" style="left:72.38px;top:638.56px;">Treat Unknown status as Bad</div>
<div class="sunk" style="left:282.29px;top:641.25px;width:14.29px;height:10.63px;background:#fff;"></div>
<div class="t" style="left:304px;top:638.56px;">Use "Warning" status if</div>
<div class="sunk" style="left:444.19px;top:636.09px;width:464.19px;height:20px;background:#fff;"></div>
<div class="btn cb" style="left:887.24px;top:637.97px;width:18.29px;height:16.25px;"><svg class="ar" viewBox="0 0 7 4" preserveAspectRatio="none"><path d="M0 0h7L3.5 4z" fill="#000"/></svg></div>
<div class="btn" style="left:909.71px;top:635.47px;width:24.76px;height:20px;"><svg viewBox="0 0 20 16" preserveAspectRatio="none" style="position:absolute;left:0;top:0;width:100%;height:100%"><circle cx="8.2" cy="6.5" r="4.6" fill="#fff" stroke="#222" stroke-width="1.4"/><path d="M8.2 4v5M5.7 6.5h5" stroke="#e00000" stroke-width="1.5"/><path d="M11.6 9.8L16.5 14.5" stroke="#111" stroke-width="2.2"/></svg></div>
<div class="sunk" style="left:49.52px;top:664.38px;width:14.29px;height:10.63px;background:#fff;"><svg viewBox="0 0 9 9" style="position:absolute;left:0;top:0;width:100%;height:100%"><path d="M1.5 4.2L3.5 6.4L7.5 1.8" stroke="#000" stroke-width="2.1" fill="none"/></svg></div>
<div class="t" style="left:72.38px;top:661.69px;">Treat Warning status as Bad</div>
<div class="sunk" style="left:282.29px;top:664.38px;width:14.29px;height:10.63px;background:#fff;"></div>
<div class="t" style="left:304px;top:661.69px;">Use "Normal" status if</div>
<div class="sunk" style="left:444.19px;top:659.53px;width:464.19px;height:20px;background:#fff;"></div>
<div class="btn cb" style="left:887.24px;top:661.41px;width:18.29px;height:16.25px;"><svg class="ar" viewBox="0 0 7 4" preserveAspectRatio="none"><path d="M0 0h7L3.5 4z" fill="#000"/></svg></div>
<div class="btn" style="left:909.71px;top:658.91px;width:24.76px;height:20px;"><svg viewBox="0 0 20 16" preserveAspectRatio="none" style="position:absolute;left:0;top:0;width:100%;height:100%"><circle cx="8.2" cy="6.5" r="4.6" fill="#fff" stroke="#222" stroke-width="1.4"/><path d="M8.2 4v5M5.7 6.5h5" stroke="#e00000" stroke-width="1.5"/><path d="M11.6 9.8L16.5 14.5" stroke="#111" stroke-width="2.2"/></svg></div>
<div style="left:36.19px;top:681.56px;width:912.38px;height:1.09px;background:#a6a6a6;"></div>
<div style="left:36.19px;top:682.66px;width:912.38px;height:1.09px;background:#fff;"></div>
<div class="sunk" style="left:49.52px;top:690.31px;width:14.29px;height:10.63px;background:#fff;"></div>
<div class="t" style="left:72.38px;top:687.62px;">Tune up Reply value</div>
<div class="t" style="left:387.81px;top:687.62px;">Reply =</div>
<div class="sunk" style="left:444.19px;top:685.47px;width:464.19px;height:20.62px;background:#fff;"></div>
<div class="btn cb" style="left:887.24px;top:687.34px;width:18.29px;height:16.88px;"><svg class="ar" viewBox="0 0 7 4" preserveAspectRatio="none"><path d="M0 0h7L3.5 4z" fill="#000"/></svg></div>
<div class="btn" style="left:909.71px;top:685.16px;width:24.76px;height:20.31px;"><svg viewBox="0 0 20 16" preserveAspectRatio="none" style="position:absolute;left:0;top:0;width:100%;height:100%"><circle cx="8.2" cy="6.5" r="4.6" fill="#fff" stroke="#222" stroke-width="1.4"/><path d="M8.2 4v5M5.7 6.5h5" stroke="#e00000" stroke-width="1.5"/><path d="M11.6 9.8L16.5 14.5" stroke="#111" stroke-width="2.2"/></svg></div>
<div style="left:33.14px;top:727.19px;width:448px;height:34.69px;border-style:solid;border-width:1px 1.22px;border-color:#cfcfcf #fff #fff #cfcfcf;"></div>
<div class="t b" style="left:46.86px;top:737.31px;">Test is</div>
<div class="sunk" style="left:113.52px;top:735.78px;width:90.1px;height:19.69px;background:#fff;"></div>
<div class="btn cb" style="left:182.48px;top:737.66px;width:18.29px;height:15.94px;"><svg class="ar" viewBox="0 0 7 4" preserveAspectRatio="none"><path d="M0 0h7L3.5 4z" fill="#000"/></svg></div>
<div class="t" style="left:120.38px;top:737.78px;color:#000;">Enabled</div>
<div class="btn" style="left:378.29px;top:733.59px;width:43.05px;height:23.44px;"><svg viewBox="0 0 20 16" preserveAspectRatio="none" style="position:absolute;left:0;top:0;width:100%;height:100%"><path d="M5.2 8.6L9.6 5.2V7.6H14.6V9.6H9.6V12z" fill="#e00000" stroke="#500" stroke-width="0.7"/></svg></div>
<div class="btn" style="left:421.33px;top:733.59px;width:45.33px;height:23.44px;"><svg viewBox="0 0 20 16" preserveAspectRatio="none" style="position:absolute;left:0;top:0;width:100%;height:100%"><path d="M14.8 8.6L10.4 5.2V7.6H5.4V9.6H10.4V12z" fill="#e00000" stroke="#500" stroke-width="0.7"/></svg></div>
<div style="left:502.1px;top:727.19px;width:447.62px;height:34.69px;border-style:solid;border-width:1px 1.22px;border-color:#cfcfcf #fff #fff #cfcfcf;"></div>
<div class="btn" style="left:516.19px;top:733.59px;width:88.76px;height:24.06px;"></div>
<div class="t" style="left:516.19px;width:88.76px;text-align:center;top:738.09px;">OK</div>
<div class="btn" style="left:627.81px;top:733.59px;width:88.38px;height:24.06px;"></div>
<div class="t" style="left:627.81px;width:88.38px;text-align:center;top:738.09px;"><u>A</u>pply</div>
<div class="btn" style="left:739.05px;top:733.59px;width:88.76px;height:24.06px;"></div>
<div class="t" style="left:739.05px;width:88.76px;text-align:center;top:738.09px;">Cancel</div>
<div class="btn" style="left:850.67px;top:733.59px;width:88.38px;height:24.06px;"></div>
<div class="t" style="left:850.67px;width:88.38px;text-align:center;top:738.09px;"><u>H</u>elp</div>
<div style="left:1038.1px;top:153.75px;width:831.62px;height:668.12px;background:#f0c869;border:1px solid #d9a94a;"></div>
<div style="left:1047.62px;top:184.38px;width:812.57px;height:629.69px;background:#f0f0f0;"></div>
<div class="t ttl" style="left:1253.33px;width:400px;text-align:center;top:158.75px;height:20px;line-height:20px;font-size:15.6px;color:#3a3420;transform:scaleX(1.2)">Trap filter</div>
<div style="left:1824.76px;top:154.69px;width:36.19px;height:19.06px;background:#c75050;"><svg viewBox="0 0 30 20" preserveAspectRatio="none" style="position:absolute;left:0;top:0;width:100%;height:100%"><path d="M11.5 6.5l7 7M18.5 6.5l-7 7" stroke="#fff" stroke-width="1.9"/></svg></div>
<div class="grp" style="left:1057.14px;top:201.56px;width:790.48px;height:271.25px;"></div>
<div style="left:1069.52px;top:192.19px;width:319.05px;height:18.12px;background:#f0f0f0;"></div>
<div class="sunk" style="left:1072.38px;top:191.41px;width:314.48px;height:20.31px;background:#fff;"></div>
<div class="btn cb" style="left:1365.71px;top:193.28px;width:18.29px;height:16.56px;"><svg class="ar" viewBox="0 0 7 4" preserveAspectRatio="none"><path d="M0 0h7L3.5 4z" fill="#000"/></svg></div>
<div style="left:1076.95px;top:194.53px;width:287.62px;height:14.06px;background:#3399ff;outline:1px dotted #cc6600;outline-offset:-1px;"></div>
<div class="t" style="left:1079.24px;top:193.72px;color:#fff;">set "Bad" status if received message satisfies:</div>
<div style="left:1073.33px;top:221.88px;width:173.33px;height:63.44px;border-style:solid;border-width:1px 1.22px;border-color:#a6a6a6;box-shadow:inset 1.22px 1px 0 #fff,1.71px 1.6px 0 #9c9c9c;"></div>
<div style="left:1081.9px;top:216.56px;width:140.95px;height:12.5px;background:#f0f0f0;"></div>
<div class="t" style="left:1084.76px;top:215.12px;">SNMP device (address)</div>
<div class="sunk" style="left:1072.57px;top:286.88px;width:174.67px;height:96.88px;background:#fff;"></div>
<div style="left:1075.62px;top:288.75px;width:168.76px;height:14.38px;background:#3399ff;"></div>
<div class="t" style="left:1077.52px;top:288.56px;color:#fff;">172.18.255.230</div>
<div style="left:1075.62px;top:303.12px;width:168.76px;height:16.87px;background:#fff;border:1px solid #d4d4d4;"></div>
<div style="left:1083.24px;top:232.19px;width:13.71px;height:11.25px;"><svg viewBox="0 0 12 12" preserveAspectRatio="none" style="position:absolute;left:0;top:0;width:100%;height:100%"><circle cx="6" cy="6" r="5" fill="#fff"/><path d="M2.2 9.8A5.4 5.4 0 0 1 9.8 2.2" stroke="#808080" stroke-width="1.3" fill="none"/><path d="M9.8 2.2A5.4 5.4 0 0 1 2.2 9.8" stroke="#fff" stroke-width="1.3" fill="none"/><path d="M3 9A4.2 4.2 0 0 1 9 3" stroke="#555" stroke-width="1" fill="none"/></svg></div>
<div class="t" style="left:1102.67px;top:230.12px;">Any</div>
<div style="left:1083.24px;top:250px;width:13.71px;height:11.25px;"><svg viewBox="0 0 12 12" preserveAspectRatio="none" style="position:absolute;left:0;top:0;width:100%;height:100%"><circle cx="6" cy="6" r="5" fill="#fff"/><path d="M2.2 9.8A5.4 5.4 0 0 1 9.8 2.2" stroke="#808080" stroke-width="1.3" fill="none"/><path d="M9.8 2.2A5.4 5.4 0 0 1 2.2 9.8" stroke="#fff" stroke-width="1.3" fill="none"/><path d="M3 9A4.2 4.2 0 0 1 9 3" stroke="#555" stroke-width="1" fill="none"/><circle cx="6" cy="6" r="2" fill="#000"/></svg></div>
<div class="t" style="left:1102.67px;top:247.94px;">Any from the following</div>
<div style="left:1083.24px;top:267.5px;width:13.71px;height:11.25px;"><svg viewBox="0 0 12 12" preserveAspectRatio="none" style="position:absolute;left:0;top:0;width:100%;height:100%"><circle cx="6" cy="6" r="5" fill="#fff"/><path d="M2.2 9.8A5.4 5.4 0 0 1 9.8 2.2" stroke="#808080" stroke-width="1.3" fill="none"/><path d="M9.8 2.2A5.4 5.4 0 0 1 2.2 9.8" stroke="#fff" stroke-width="1.3" fill="none"/><path d="M3 9A4.2 4.2 0 0 1 9 3" stroke="#555" stroke-width="1" fill="none"/></svg></div>
<div class="t" style="left:1102.67px;top:265.44px;">Any except the following</div>
<div style="left:1261.9px;top:221.88px;width:159.05px;height:63.44px;border-style:solid;border-width:1px 1.22px;border-color:#a6a6a6;box-shadow:inset 1.22px 1px 0 #fff,1.71px 1.6px 0 #9c9c9c;"></div>
<div style="left:1272.38px;top:216.56px;width:112.38px;height:12.5px;background:#f0f0f0;"></div>
<div class="t" style="left:1275.24px;top:215.12px;">Trap type (generic)</div>
<div class="sunk" style="left:1261.14px;top:286.88px;width:160.38px;height:96.88px;background:#fff;"></div>
<div style="left:1267.24px;top:289.38px;width:11.43px;height:9.69px;background:#fff;border-style:solid;border-width:1.2px 1.46px;border-color:#909090;"></div>
<div class="t" style="left:1284.76px;top:286.22px;">Cold Start</div>
<div style="left:1267.24px;top:302.03px;width:11.43px;height:9.69px;background:#fff;border-style:solid;border-width:1.2px 1.46px;border-color:#909090;"></div>
<div class="t" style="left:1284.76px;top:298.87px;">Warm Start</div>
<div style="left:1267.24px;top:314.69px;width:11.43px;height:9.69px;background:#fff;border-style:solid;border-width:1.2px 1.46px;border-color:#909090;"></div>
<div class="t" style="left:1284.76px;top:311.53px;">Link Down</div>
<div style="left:1267.24px;top:327.34px;width:11.43px;height:9.69px;background:#fff;border-style:solid;border-width:1.2px 1.46px;border-color:#909090;"></div>
<div class="t" style="left:1284.76px;top:324.19px;">Link Up</div>
<div style="left:1267.24px;top:340px;width:11.43px;height:9.69px;background:#fff;border-style:solid;border-width:1.2px 1.46px;border-color:#909090;"></div>
<div class="t" style="left:1284.76px;top:336.84px;">Authentication Failure</div>
<div style="left:1267.24px;top:352.66px;width:11.43px;height:9.69px;background:#fff;border-style:solid;border-width:1.2px 1.46px;border-color:#909090;"></div>
<div class="t" style="left:1284.76px;top:349.5px;">EGP Neighbor Loss</div>
<div style="left:1267.24px;top:365.31px;width:11.43px;height:9.69px;background:#fff;border-style:solid;border-width:1.2px 1.46px;border-color:#909090;"></div>
<div class="t" style="left:1284.76px;top:362.16px;">Enterprise Specific</div>
<div style="left:1271.81px;top:236.88px;width:13.71px;height:11.25px;"><svg viewBox="0 0 12 12" preserveAspectRatio="none" style="position:absolute;left:0;top:0;width:100%;height:100%"><circle cx="6" cy="6" r="5" fill="#fff"/><path d="M2.2 9.8A5.4 5.4 0 0 1 9.8 2.2" stroke="#808080" stroke-width="1.3" fill="none"/><path d="M9.8 2.2A5.4 5.4 0 0 1 2.2 9.8" stroke="#fff" stroke-width="1.3" fill="none"/><path d="M3 9A4.2 4.2 0 0 1 9 3" stroke="#555" stroke-width="1" fill="none"/><circle cx="6" cy="6" r="2" fill="#000"/></svg></div>
<div class="t" style="left:1291.24px;top:234.81px;">Any</div>
<div style="left:1271.81px;top:263.44px;width:13.71px;height:11.25px;"><svg viewBox="0 0 12 12" preserveAspectRatio="none" style="position:absolute;left:0;top:0;width:100%;height:100%"><circle cx="6" cy="6" r="5" fill="#fff"/><path d="M2.2 9.8A5.4 5.4 0 0 1 9.8 2.2" stroke="#808080" stroke-width="1.3" fill="none"/><path d="M9.8 2.2A5.4 5.4 0 0 1 2.2 9.8" stroke="#fff" stroke-width="1.3" fill="none"/><path d="M3 9A4.2 4.2 0 0 1 9 3" stroke="#555" stroke-width="1" fill="none"/></svg></div>
<div class="t" style="left:1291.24px;top:261.37px;">Any from the following</div>
<div style="left:1442.86px;top:221.88px;width:173.33px;height:63.44px;border-style:solid;border-width:1px 1.22px;border-color:#a6a6a6;box-shadow:inset 1.22px 1px 0 #fff,1.71px 1.6px 0 #9c9c9c;"></div>
<div style="left:1452.38px;top:216.56px;width:138.1px;height:12.5px;background:#f0f0f0;"></div>
<div class="t" style="left:1455.24px;top:215.12px;">Trap type (ent. specific)</div>
<div class="sunk" style="left:1442.1px;top:286.88px;width:174.67px;height:96.88px;background:#fff;"></div>
<div style="left:1445.14px;top:288.75px;width:168.76px;height:14.38px;background:#3399ff;"></div>
<div style="left:1452.76px;top:232.19px;width:13.71px;height:11.25px;"><svg viewBox="0 0 12 12" preserveAspectRatio="none" style="position:absolute;left:0;top:0;width:100%;height:100%"><circle cx="6" cy="6" r="5" fill="#fff"/><path d="M2.2 9.8A5.4 5.4 0 0 1 9.8 2.2" stroke="#808080" stroke-width="1.3" fill="none"/><path d="M9.8 2.2A5.4 5.4 0 0 1 2.2 9.8" stroke="#fff" stroke-width="1.3" fill="none"/><path d="M3 9A4.2 4.2 0 0 1 9 3" stroke="#555" stroke-width="1" fill="none"/><circle cx="6" cy="6" r="2" fill="#000"/></svg></div>
<div class="t" style="left:1472.19px;top:230.12px;">Any</div>
<div style="left:1452.76px;top:250px;width:13.71px;height:11.25px;"><svg viewBox="0 0 12 12" preserveAspectRatio="none" style="position:absolute;left:0;top:0;width:100%;height:100%"><circle cx="6" cy="6" r="5" fill="#fff"/><path d="M2.2 9.8A5.4 5.4 0 0 1 9.8 2.2" stroke="#808080" stroke-width="1.3" fill="none"/><path d="M9.8 2.2A5.4 5.4 0 0 1 2.2 9.8" stroke="#fff" stroke-width="1.3" fill="none"/><path d="M3 9A4.2 4.2 0 0 1 9 3" stroke="#555" stroke-width="1" fill="none"/></svg></div>
<div class="t" style="left:1472.19px;top:247.94px;">Any from the following</div>
<div style="left:1452.76px;top:267.5px;width:13.71px;height:11.25px;"><svg viewBox="0 0 12 12" preserveAspectRatio="none" style="position:absolute;left:0;top:0;width:100%;height:100%"><circle cx="6" cy="6" r="5" fill="#fff"/><path d="M2.2 9.8A5.4 5.4 0 0 1 9.8 2.2" stroke="#808080" stroke-width="1.3" fill="none"/><path d="M9.8 2.2A5.4 5.4 0 0 1 2.2 9.8" stroke="#fff" stroke-width="1.3" fill="none"/><path d="M3 9A4.2 4.2 0 0 1 9 3" stroke="#555" stroke-width="1" fill="none"/></svg></div>
<div class="t" style="left:1472.19px;top:265.44px;">Any except the following</div>
<div style="left:1633.33px;top:221.88px;width:197.14px;height:63.44px;border-style:solid;border-width:1px 1.22px;border-color:#a6a6a6;box-shadow:inset 1.22px 1px 0 #fff,1.71px 1.6px 0 #9c9c9c;"></div>
<div style="left:1641.9px;top:216.56px;width:141.9px;height:12.5px;background:#f0f0f0;"></div>
<div class="t" style="left:1644.76px;top:215.12px;">Enterprise (sysObjectID)</div>
<div class="sunk" style="left:1632.57px;top:286.88px;width:198.48px;height:96.88px;background:#fff;"></div>
<div style="left:1635.62px;top:288.75px;width:192.57px;height:14.38px;background:#3399ff;"></div>
<div style="left:1643.24px;top:232.19px;width:13.71px;height:11.25px;"><svg viewBox="0 0 12 12" preserveAspectRatio="none" style="position:absolute;left:0;top:0;width:100%;height:100%"><circle cx="6" cy="6" r="5" fill="#fff"/><path d="M2.2 9.8A5.4 5.4 0 0 1 9.8 2.2" stroke="#808080" stroke-width="1.3" fill="none"/><path d="M9.8 2.2A5.4 5.4 0 0 1 2.2 9.8" stroke="#fff" stroke-width="1.3" fill="none"/><path d="M3 9A4.2 4.2 0 0 1 9 3" stroke="#555" stroke-width="1" fill="none"/><circle cx="6" cy="6" r="2" fill="#000"/></svg></div>
<div class="t" style="left:1662.67px;top:230.12px;">Any</div>
<div style="left:1643.24px;top:250px;width:13.71px;height:11.25px;"><svg viewBox="0 0 12 12" preserveAspectRatio="none" style="position:absolute;left:0;top:0;width:100%;height:100%"><circle cx="6" cy="6" r="5" fill="#fff"/><path d="M2.2 9.8A5.4 5.4 0 0 1 9.8 2.2" stroke="#808080" stroke-width="1.3" fill="none"/><path d="M9.8 2.2A5.4 5.4 0 0 1 2.2 9.8" stroke="#fff" stroke-width="1.3" fill="none"/><path d="M3 9A4.2 4.2 0 0 1 9 3" stroke="#555" stroke-width="1" fill="none"/></svg></div>
<div class="t" style="left:1662.67px;top:247.94px;">Any from the following</div>
<div style="left:1643.24px;top:267.5px;width:13.71px;height:11.25px;"><svg viewBox="0 0 12 12" preserveAspectRatio="none" style="position:absolute;left:0;top:0;width:100%;height:100%"><circle cx="6" cy="6" r="5" fill="#fff"/><path d="M2.2 9.8A5.4 5.4 0 0 1 9.8 2.2" stroke="#808080" stroke-width="1.3" fill="none"/><path d="M9.8 2.2A5.4 5.4 0 0 1 2.2 9.8" stroke="#fff" stroke-width="1.3" fill="none"/><path d="M3 9A4.2 4.2 0 0 1 9 3" stroke="#555" stroke-width="1" fill="none"/></svg></div>
<div class="t" style="left:1662.67px;top:265.44px;">Any except the following</div>
<div class="sunk" style="left:1072.76px;top:399.06px;width:14.29px;height:10.62px;background:#fff;"><svg viewBox="0 0 9 9" style="position:absolute;left:0;top:0;width:100%;height:100%"><path d="M1.5 4.2L3.5 6.4L7.5 1.8" stroke="#000" stroke-width="2.1" fill="none"/></svg></div>
<div class="t" style="left:1094.48px;top:396.38px;">Community string</div>
<div class="t" style="left:1200px;top:396.38px;">==</div>
<div class="sunk" style="left:1228.95px;top:394.53px;width:604px;height:20.31px;background:#fff;"></div>
<div class="btn cb" style="left:1811.81px;top:396.41px;width:18.29px;height:16.56px;"><svg class="ar" viewBox="0 0 7 4" preserveAspectRatio="none"><path d="M0 0h7L3.5 4z" fill="#000"/></svg></div>
<div class="t" style="left:1235.81px;top:396.84px;color:#000;">Adam</div>
<div class="sunk" style="left:1072.76px;top:424.38px;width:14.29px;height:10.63px;background:#fff;"></div>
<div class="t" style="left:1094.48px;top:421.69px;">message contains OID</div>
<div class="sunk" style="left:1228.95px;top:420.16px;width:162.1px;height:19.69px;background:#fff;"></div>
<div class="btn cb" style="left:1369.9px;top:422.03px;width:18.29px;height:15.94px;"><svg class="ar" viewBox="0 0 7 4" preserveAspectRatio="none"><path d="M0 0h7L3.5 4z" fill="#000"/></svg></div>
<div class="btn" style="left:1394.29px;top:418.91px;width:25.9px;height:20.62px;"><svg viewBox="0 0 20 16" preserveAspectRatio="none" style="position:absolute;left:0;top:0;width:100%;height:100%"><path d="M2.4 8.6L7.8 3L17.1 7.8L10.2 13.8z" fill="#fff"/><path d="M2.4 8.6L7.8 3L17.1 7.8" fill="none" stroke="#111" stroke-width="1.4"/><path d="M2.4 8.8L10.2 13.9L17.1 8" fill="none" stroke="#2020f0" stroke-width="1.7"/><path d="M6.6 11.6L12.8 5.2" stroke="#222" stroke-width="1.5"/></svg></div>
<div class="t" style="left:1428.57px;top:421.69px;">that</div>
<div class="sunk" style="left:1458.29px;top:420.16px;width:159.43px;height:19.69px;background:#fff;"></div>
<div class="btn cb" style="left:1596.57px;top:422.03px;width:18.29px;height:15.94px;"><svg class="ar" viewBox="0 0 7 4" preserveAspectRatio="none"><path d="M0 0h7L3.5 4z" fill="#000"/></svg></div>
<div class="t" style="left:1465.14px;top:422.16px;color:#000;">is &lt; than</div>
<div class="sunk" style="left:1632.76px;top:420.16px;width:200.19px;height:19.69px;background:#fff;"></div>
<div class="btn cb" style="left:1811.81px;top:422.03px;width:18.29px;height:15.94px;"><svg class="ar" viewBox="0 0 7 4" preserveAspectRatio="none"><path d="M0 0h7L3.5 4z" fill="#000"/></svg></div>
<div class="sunk" style="left:1072.76px;top:450px;width:14.29px;height:10.63px;background:#fff;"></div>
<div class="t" style="left:1094.48px;top:447.31px;">counters fit expression</div>
<div class="sunk" style="left:1228.95px;top:445.47px;width:604px;height:20.31px;background:#fff;"></div>
<div class="btn cb" style="left:1811.81px;top:447.34px;width:18.29px;height:16.56px;"><svg class="ar" viewBox="0 0 7 4" preserveAspectRatio="none"><path d="M0 0h7L3.5 4z" fill="#000"/></svg></div>
<div class="btn" style="left:1791.62px;top:475.16px;width:26.67px;height:20.94px;"><svg viewBox="0 0 20 16" preserveAspectRatio="none" style="position:absolute;left:0;top:0;width:100%;height:100%"><path d="M10 14L15.5 7.8H12V2H8V7.8H4.5z" fill="#1010ff"/></svg></div>
<div class="btn" style="left:1818.29px;top:475.16px;width:27.43px;height:20.94px;"><svg viewBox="0 0 20 16" preserveAspectRatio="none" style="position:absolute;left:0;top:0;width:100%;height:100%"><path d="M10 2L15.5 8.2H12V14H8V8.2H4.5z" fill="#1010ff"/></svg></div>
<div class="grp" style="left:1057.14px;top:501.72px;width:790.48px;height:270.16px;"></div>
<div style="left:1069.52px;top:492.19px;width:319.05px;height:18.13px;background:#f0f0f0;"></div>
<div class="sunk" style="left:1072.38px;top:491.41px;width:314.48px;height:20.31px;background:#fff;"></div>
<div class="btn cb" style="left:1365.71px;top:493.28px;width:18.29px;height:16.56px;"><svg class="ar" viewBox="0 0 7 4" preserveAspectRatio="none"><path d="M0 0h7L3.5 4z" fill="#000"/></svg></div>
<div class="t" style="left:1079.24px;top:493.72px;color:#000;">set "Ok" status if no "bad" trap received within</div>
<div style="left:1387.62px;top:492.19px;width:124.76px;height:18.13px;background:#f0f0f0;"></div>
<div class="sunk" style="left:1390.86px;top:492.19px;width:85.14px;height:18.13px;background:#fff;"></div>
<div class="t" style="left:1394.29px;width:57.14px;text-align:center;top:493.25px;">5</div>
<div class="btn sp" style="left:1452.95px;top:493.75px;width:20.95px;height:15.31px;"><svg viewBox="0 0 20 18" preserveAspectRatio="none" style="position:absolute;left:0;top:0;width:100%;height:100%"><path d="M1.5 16.5L18.5 1.5" stroke="#111" stroke-width="1.2"/><path d="M5.6 1.6L9.6 6.2H1.6z M4.6 6.2h2v3.4h-2z" fill="#000"/><path d="M14.4 16.4L10.4 11.8h8z M13.4 8.4h2v3.4h-2z" fill="#000"/></svg></div>
<div class="t" style="left:1484.95px;top:493.25px;">sec</div>
<div style="left:1073.33px;top:520.94px;width:173.33px;height:64.38px;border-style:solid;border-width:1px 1.22px;border-color:#a6a6a6;box-shadow:inset 1.22px 1px 0 #fff,1.71px 1.6px 0 #9c9c9c;"></div>
<div style="left:1081.9px;top:516.56px;width:140.95px;height:12.5px;background:#f0f0f0;"></div>
<div class="t" style="left:1084.76px;top:515.12px;color:#3a3a3a;">SNMP device (address)</div>
<div class="sunk" style="left:1072.57px;top:586.88px;width:174.67px;height:96.88px;background:#fff;"></div>
<div style="left:1075.62px;top:588.75px;width:168.76px;height:14.37px;background:#3399ff;"></div>
<div style="left:1083.24px;top:532.19px;width:13.71px;height:11.25px;"><svg viewBox="0 0 12 12" preserveAspectRatio="none" style="position:absolute;left:0;top:0;width:100%;height:100%"><circle cx="6" cy="6" r="5" fill="#f0f0f0"/><path d="M2.2 9.8A5.4 5.4 0 0 1 9.8 2.2" stroke="#808080" stroke-width="1.3" fill="none"/><path d="M9.8 2.2A5.4 5.4 0 0 1 2.2 9.8" stroke="#fff" stroke-width="1.3" fill="none"/><path d="M3 9A4.2 4.2 0 0 1 9 3" stroke="#555" stroke-width="1" fill="none"/><circle cx="6" cy="6" r="2" fill="#8a8a8a"/></svg></div>
<div class="t" style="left:1102.67px;top:530.12px;color:#9a9a9a;text-shadow:1px 1px 0 #fff;">Any</div>
<div style="left:1083.24px;top:550px;width:13.71px;height:11.25px;"><svg viewBox="0 0 12 12" preserveAspectRatio="none" style="position:absolute;left:0;top:0;width:100%;height:100%"><circle cx="6" cy="6" r="5" fill="#f0f0f0"/><path d="M2.2 9.8A5.4 5.4 0 0 1 9.8 2.2" stroke="#808080" stroke-width="1.3" fill="none"/><path d="M9.8 2.2A5.4 5.4 0 0 1 2.2 9.8" stroke="#fff" stroke-width="1.3" fill="none"/><path d="M3 9A4.2 4.2 0 0 1 9 3" stroke="#555" stroke-width="1" fill="none"/></svg></div>
<div class="t" style="left:1102.67px;top:547.94px;color:#9a9a9a;text-shadow:1px 1px 0 #fff;">Any from the following</div>
<div style="left:1083.24px;top:567.5px;width:13.71px;height:11.25px;"><svg viewBox="0 0 12 12" preserveAspectRatio="none" style="position:absolute;left:0;top:0;width:100%;height:100%"><circle cx="6" cy="6" r="5" fill="#f0f0f0"/><path d="M2.2 9.8A5.4 5.4 0 0 1 9.8 2.2" stroke="#808080" stroke-width="1.3" fill="none"/><path d="M9.8 2.2A5.4 5.4 0 0 1 2.2 9.8" stroke="#fff" stroke-width="1.3" fill="none"/><path d="M3 9A4.2 4.2 0 0 1 9 3" stroke="#555" stroke-width="1" fill="none"/></svg></div>
<div class="t" style="left:1102.67px;top:565.44px;color:#9a9a9a;text-shadow:1px 1px 0 #fff;">Any except the following</div>
<div style="left:1261.9px;top:520.94px;width:159.05px;height:64.38px;border-style:solid;border-width:1px 1.22px;border-color:#a6a6a6;box-shadow:inset 1.22px 1px 0 #fff,1.71px 1.6px 0 #9c9c9c;"></div>
<div style="left:1272.38px;top:516.56px;width:112.38px;height:12.5px;background:#f0f0f0;"></div>
<div class="t" style="left:1275.24px;top:515.12px;color:#3a3a3a;">Trap type (generic)</div>
<div class="sunk" style="left:1261.14px;top:586.88px;width:160.38px;height:96.88px;background:#fff;"></div>
<div style="left:1267.24px;top:589.38px;width:11.43px;height:9.69px;background:#f4f4f4;border-style:solid;border-width:1.2px 1.46px;border-color:#b4b4b4;"></div>
<div class="t" style="left:1284.76px;top:586.22px;color:#4a4a4a;">Cold Start</div>
<div style="left:1267.24px;top:602.03px;width:11.43px;height:9.69px;background:#f4f4f4;border-style:solid;border-width:1.2px 1.46px;border-color:#b4b4b4;"></div>
<div class="t" style="left:1284.76px;top:598.88px;color:#4a4a4a;">Warm Start</div>
<div style="left:1267.24px;top:614.69px;width:11.43px;height:9.69px;background:#f4f4f4;border-style:solid;border-width:1.2px 1.46px;border-color:#b4b4b4;"></div>
<div class="t" style="left:1284.76px;top:611.53px;color:#4a4a4a;">Link Down</div>
<div style="left:1267.24px;top:627.34px;width:11.43px;height:9.69px;background:#f4f4f4;border-style:solid;border-width:1.2px 1.46px;border-color:#b4b4b4;"></div>
<div class="t" style="left:1284.76px;top:624.19px;color:#4a4a4a;">Link Up</div>
<div style="left:1267.24px;top:640px;width:11.43px;height:9.69px;background:#f4f4f4;border-style:solid;border-width:1.2px 1.46px;border-color:#b4b4b4;"></div>
<div class="t" style="left:1284.76px;top:636.84px;color:#4a4a4a;">Authentication Failure</div>
<div style="left:1267.24px;top:652.66px;width:11.43px;height:9.69px;background:#f4f4f4;border-style:solid;border-width:1.2px 1.46px;border-color:#b4b4b4;"></div>
<div class="t" style="left:1284.76px;top:649.5px;color:#4a4a4a;">EGP Neighbor Loss</div>
<div style="left:1267.24px;top:665.31px;width:11.43px;height:9.69px;background:#f4f4f4;border-style:solid;border-width:1.2px 1.46px;border-color:#b4b4b4;"></div>
<div class="t" style="left:1284.76px;top:662.16px;color:#4a4a4a;">Enterprise Specific</div>
<div style="left:1271.81px;top:536.88px;width:13.71px;height:11.25px;"><svg viewBox="0 0 12 12" preserveAspectRatio="none" style="position:absolute;left:0;top:0;width:100%;height:100%"><circle cx="6" cy="6" r="5" fill="#f0f0f0"/><path d="M2.2 9.8A5.4 5.4 0 0 1 9.8 2.2" stroke="#808080" stroke-width="1.3" fill="none"/><path d="M9.8 2.2A5.4 5.4 0 0 1 2.2 9.8" stroke="#fff" stroke-width="1.3" fill="none"/><path d="M3 9A4.2 4.2 0 0 1 9 3" stroke="#555" stroke-width="1" fill="none"/><circle cx="6" cy="6" r="2" fill="#8a8a8a"/></svg></div>
<div class="t" style="left:1291.24px;top:534.81px;color:#9a9a9a;text-shadow:1px 1px 0 #fff;">Any</div>
<div style="left:1271.81px;top:563.44px;width:13.71px;height:11.25px;"><svg viewBox="0 0 12 12" preserveAspectRatio="none" style="position:absolute;left:0;top:0;width:100%;height:100%"><circle cx="6" cy="6" r="5" fill="#f0f0f0"/><path d="M2.2 9.8A5.4 5.4 0 0 1 9.8 2.2" stroke="#808080" stroke-width="1.3" fill="none"/><path d="M9.8 2.2A5.4 5.4 0 0 1 2.2 9.8" stroke="#fff" stroke-width="1.3" fill="none"/><path d="M3 9A4.2 4.2 0 0 1 9 3" stroke="#555" stroke-width="1" fill="none"/></svg></div>
<div class="t" style="left:1291.24px;top:561.38px;color:#9a9a9a;text-shadow:1px 1px 0 #fff;">Any from the following</div>
<div style="left:1442.86px;top:520.94px;width:173.33px;height:64.38px;border-style:solid;border-width:1px 1.22px;border-color:#a6a6a6;box-shadow:inset 1.22px 1px 0 #fff,1.71px 1.6px 0 #9c9c9c;"></div>
<div style="left:1452.38px;top:516.56px;width:138.1px;height:12.5px;background:#f0f0f0;"></div>
<div class="t" style="left:1455.24px;top:515.12px;color:#3a3a3a;">Trap type (ent. specific)</div>
<div class="sunk" style="left:1442.1px;top:586.88px;width:174.67px;height:96.88px;background:#fff;"></div>
<div style="left:1445.14px;top:588.75px;width:168.76px;height:14.37px;background:#3399ff;"></div>
<div style="left:1452.76px;top:532.19px;width:13.71px;height:11.25px;"><svg viewBox="0 0 12 12" preserveAspectRatio="none" style="position:absolute;left:0;top:0;width:100%;height:100%"><circle cx="6" cy="6" r="5" fill="#f0f0f0"/><path d="M2.2 9.8A5.4 5.4 0 0 1 9.8 2.2" stroke="#808080" stroke-width="1.3" fill="none"/><path d="M9.8 2.2A5.4 5.4 0 0 1 2.2 9.8" stroke="#fff" stroke-width="1.3" fill="none"/><path d="M3 9A4.2 4.2 0 0 1 9 3" stroke="#555" stroke-width="1" fill="none"/><circle cx="6" cy="6" r="2" fill="#8a8a8a"/></svg></div>
<div class="t" style="left:1472.19px;top:530.12px;color:#9a9a9a;text-shadow:1px 1px 0 #fff;">Any</div>
<div style="left:1452.76px;top:550px;width:13.71px;height:11.25px;"><svg viewBox="0 0 12 12" preserveAspectRatio="none" style="position:absolute;left:0;top:0;width:100%;height:100%"><circle cx="6" cy="6" r="5" fill="#f0f0f0"/><path d="M2.2 9.8A5.4 5.4 0 0 1 9.8 2.2" stroke="#808080" stroke-width="1.3" fill="none"/><path d="M9.8 2.2A5.4 5.4 0 0 1 2.2 9.8" stroke="#fff" stroke-width="1.3" fill="none"/><path d="M3 9A4.2 4.2 0 0 1 9 3" stroke="#555" stroke-width="1" fill="none"/></svg></div>
<div class="t" style="left:1472.19px;top:547.94px;color:#9a9a9a;text-shadow:1px 1px 0 #fff;">Any from the following</div>
<div style="left:1452.76px;top:567.5px;width:13.71px;height:11.25px;"><svg viewBox="0 0 12 12" preserveAspectRatio="none" style="position:absolute;left:0;top:0;width:100%;height:100%"><circle cx="6" cy="6" r="5" fill="#f0f0f0"/><path d="M2.2 9.8A5.4 5.4 0 0 1 9.8 2.2" stroke="#808080" stroke-width="1.3" fill="none"/><path d="M9.8 2.2A5.4 5.4 0 0 1 2.2 9.8" stroke="#fff" stroke-width="1.3" fill="none"/><path d="M3 9A4.2 4.2 0 0 1 9 3" stroke="#555" stroke-width="1" fill="none"/></svg></div>
<div class="t" style="left:1472.19px;top:565.44px;color:#9a9a9a;text-shadow:1px 1px 0 #fff;">Any except the following</div>
<div style="left:1633.33px;top:520.94px;width:197.14px;height:64.38px;border-style:solid;border-width:1px 1.22px;border-color:#a6a6a6;box-shadow:inset 1.22px 1px 0 #fff,1.71px 1.6px 0 #9c9c9c;"></div>
<div style="left:1641.9px;top:516.56px;width:141.9px;height:12.5px;background:#f0f0f0;"></div>
<div class="t" style="left:1644.76px;top:515.12px;color:#3a3a3a;">Enterprise (sysObjectID)</div>
<div class="sunk" style="left:1632.57px;top:586.88px;width:198.48px;height:96.88px;background:#fff;"></div>
<div style="left:1635.62px;top:588.75px;width:192.57px;height:14.37px;background:#3399ff;"></div>
<div style="left:1643.24px;top:532.19px;width:13.71px;height:11.25px;"><svg viewBox="0 0 12 12" preserveAspectRatio="none" style="position:absolute;left:0;top:0;width:100%;height:100%"><circle cx="6" cy="6" r="5" fill="#f0f0f0"/><path d="M2.2 9.8A5.4 5.4 0 0 1 9.8 2.2" stroke="#808080" stroke-width="1.3" fill="none"/><path d="M9.8 2.2A5.4 5.4 0 0 1 2.2 9.8" stroke="#fff" stroke-width="1.3" fill="none"/><path d="M3 9A4.2 4.2 0 0 1 9 3" stroke="#555" stroke-width="1" fill="none"/><circle cx="6" cy="6" r="2" fill="#8a8a8a"/></svg></div>
<div class="t" style="left:1662.67px;top:530.12px;color:#9a9a9a;text-shadow:1px 1px 0 #fff;">Any</div>
<div style="left:1643.24px;top:550px;width:13.71px;height:11.25px;"><svg viewBox="0 0 12 12" preserveAspectRatio="none" style="position:absolute;left:0;top:0;width:100%;height:100%"><circle cx="6" cy="6" r="5" fill="#f0f0f0"/><path d="M2.2 9.8A5.4 5.4 0 0 1 9.8 2.2" stroke="#808080" stroke-width="1.3" fill="none"/><path d="M9.8 2.2A5.4 5.4 0 0 1 2.2 9.8" stroke="#fff" stroke-width="1.3" fill="none"/><path d="M3 9A4.2 4.2 0 0 1 9 3" stroke="#555" stroke-width="1" fill="none"/></svg></div>
<div class="t" style="left:1662.67px;top:547.94px;color:#9a9a9a;text-shadow:1px 1px 0 #fff;">Any from the following</div>
<div style="left:1643.24px;top:567.5px;width:13.71px;height:11.25px;"><svg viewBox="0 0 12 12" preserveAspectRatio="none" style="position:absolute;left:0;top:0;width:100%;height:100%"><circle cx="6" cy="6" r="5" fill="#f0f0f0"/><path d="M2.2 9.8A5.4 5.4 0 0 1 9.8 2.2" stroke="#808080" stroke-width="1.3" fill="none"/><path d="M9.8 2.2A5.4 5.4 0 0 1 2.2 9.8" stroke="#fff" stroke-width="1.3" fill="none"/><path d="M3 9A4.2 4.2 0 0 1 9 3" stroke="#555" stroke-width="1" fill="none"/></svg></div>
<div class="t" style="left:1662.67px;top:565.44px;color:#9a9a9a;text-shadow:1px 1px 0 #fff;">Any except the following</div>
<div class="sunk" style="left:1072.76px;top:699.06px;width:14.29px;height:10.63px;background:#f0f0f0;"></div>
<div class="t" style="left:1094.48px;top:696.38px;color:#9a9a9a;text-shadow:1px 1px 0 #fff;">Community string</div>
<div class="t" style="left:1200px;top:696.38px;color:#9a9a9a;text-shadow:1px 1px 0 #fff;">==</div>
<div class="sunk" style="left:1228.95px;top:694.53px;width:604px;height:20.31px;background:#fff;"></div>
<div class="btn cb" style="left:1811.81px;top:696.41px;width:18.29px;height:16.56px;"><svg class="ar" viewBox="0 0 7 4" preserveAspectRatio="none"><path d="M0 0h7L3.5 4z" fill="#a0a0a0"/></svg></div>
<div class="sunk" style="left:1072.76px;top:724.38px;width:14.29px;height:10.63px;background:#f0f0f0;"></div>
<div class="t" style="left:1094.48px;top:721.69px;color:#9a9a9a;text-shadow:1px 1px 0 #fff;">message contains OID</div>
<div class="sunk" style="left:1228.95px;top:720.16px;width:162.1px;height:19.69px;background:#fff;"></div>
<div class="btn cb" style="left:1369.9px;top:722.03px;width:18.29px;height:15.94px;"><svg class="ar" viewBox="0 0 7 4" preserveAspectRatio="none"><path d="M0 0h7L3.5 4z" fill="#a0a0a0"/></svg></div>
<div class="btn" style="left:1394.29px;top:718.91px;width:25.9px;height:20.62px;"><svg viewBox="0 0 20 16" preserveAspectRatio="none" style="position:absolute;left:0;top:0;width:100%;height:100%"><path d="M2.4 8.6L7.8 3L17.1 7.8L10.2 13.8z" fill="#fff"/><path d="M2.4 8.6L7.8 3L17.1 7.8" fill="none" stroke="#111" stroke-width="1.4"/><path d="M2.4 8.8L10.2 13.9L17.1 8" fill="none" stroke="#2020f0" stroke-width="1.7"/><path d="M6.6 11.6L12.8 5.2" stroke="#222" stroke-width="1.5"/></svg></div>
<div class="t" style="left:1428.57px;top:721.69px;color:#9a9a9a;text-shadow:1px 1px 0 #fff;">that</div>
<div class="sunk" style="left:1458.29px;top:720.16px;width:159.43px;height:19.69px;background:#fff;"></div>
<div class="btn cb" style="left:1596.57px;top:722.03px;width:18.29px;height:15.94px;"><svg class="ar" viewBox="0 0 7 4" preserveAspectRatio="none"><path d="M0 0h7L3.5 4z" fill="#a0a0a0"/></svg></div>
<div class="t" style="left:1465.14px;top:722.16px;color:#6d6d6d;">is &lt; than</div>
<div class="sunk" style="left:1632.76px;top:720.16px;width:200.19px;height:19.69px;background:#fff;"></div>
<div class="btn cb" style="left:1811.81px;top:722.03px;width:18.29px;height:15.94px;"><svg class="ar" viewBox="0 0 7 4" preserveAspectRatio="none"><path d="M0 0h7L3.5 4z" fill="#a0a0a0"/></svg></div>
<div class="sunk" style="left:1072.76px;top:749.69px;width:14.29px;height:10.63px;background:#f0f0f0;"></div>
<div class="t" style="left:1094.48px;top:747px;color:#9a9a9a;text-shadow:1px 1px 0 #fff;">counters fit expression</div>
<div class="sunk" style="left:1228.95px;top:745.16px;width:604px;height:20.31px;background:#fff;"></div>
<div class="btn cb" style="left:1811.81px;top:747.03px;width:18.29px;height:16.56px;"><svg class="ar" viewBox="0 0 7 4" preserveAspectRatio="none"><path d="M0 0h7L3.5 4z" fill="#a0a0a0"/></svg></div>
<div class="btn def" style="left:1273.52px;top:783.59px;width:100.95px;height:24.69px;"></div>
<div class="t" style="left:1273.52px;width:100.95px;text-align:center;top:788.41px;">Ok</div>
<div class="btn" style="left:1403.05px;top:783.59px;width:100.95px;height:24.69px;"></div>
<div class="t" style="left:1403.05px;width:100.95px;text-align:center;top:788.41px;">Cancel</div>
<div class="btn" style="left:1531.43px;top:783.59px;width:100.95px;height:24.69px;"></div>
<div class="t" style="left:1531.43px;width:100.95px;text-align:center;top:788.41px;"><u>H</u>elp</div>
</div></body></html>
